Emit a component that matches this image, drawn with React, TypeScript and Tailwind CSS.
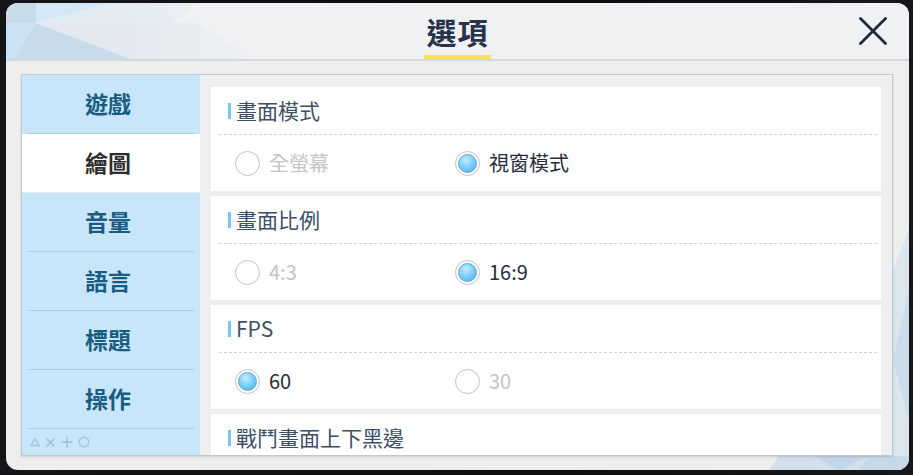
import React, { useState } from 'react';

const FONT = { fontFamily: '"Noto Sans CJK TC", "Noto Sans", sans-serif' };

const tabs = ['遊戲', '繪圖', '音量', '語言', '標題', '操作'];

type Section = { title: string; options: string[]; selected: number };

// last section is cut off by the scroll area, only its title shows
const sections: Section[] = [
  { title: '畫面模式', options: ['全螢幕', '視窗模式'], selected: 1 },
  { title: '畫面比例', options: ['4:3', '16:9'], selected: 1 },
  { title: 'FPS', options: ['60', '30'], selected: 0 },
  { title: '戰鬥畫面上下黑邊', options: [], selected: 0 },
];

function Radio({ checked }: { checked: boolean }) {
  return (
    <span className="w-[25px] h-[25px] rounded-full border border-[#c2c2c2] bg-white flex items-center justify-center shrink-0">
      {checked && (
        <span className="w-[19px] h-[19px] rounded-full border border-[#5fa9d6] bg-[radial-gradient(circle_at_40%_30%,#c4ecff_0%,#7fd0fa_45%,#45abe8_100%)]" />
      )}
    </span>
  );
}

function HeaderDecor() {
  return (
    <svg className="absolute left-0 top-0" width="260" height="56" viewBox="0 0 260 56">
      <defs>
        <linearGradient id="fade" x1="0" x2="1" y1="0" y2="0">
          <stop offset="0" stopColor="#eff1f3" stopOpacity="0" />
          <stop offset="1" stopColor="#eff1f3" stopOpacity="1" />
        </linearGradient>
      </defs>
      <polygon points="0,0 30,0 30,20 0,20" fill="#c9dae9" />
      <polygon points="30,0 105,0 30,20" fill="#d3e7f7" />
      <polygon points="105,0 190,0 165,20 30,20" fill="#e4ecf3" />
      <polygon points="0,20 30,20 8,56 0,56" fill="#cbe3f5" />
      <polygon points="30,20 8,56 125,56" fill="#c8dbeb" />
      <polygon points="30,20 190,20 250,56 125,56" fill="#e3e9ef" />
      <rect x="120" y="0" width="140" height="56" fill="url(#fade)" />
    </svg>
  );
}

function BodyDecor() {
  return (
    <svg className="absolute right-0 bottom-0" width="190" height="240" viewBox="0 0 190 240">
      <polygon points="190,0 190,240 174,240 174,40" fill="#dbe5ee" />
      <polygon points="190,60 174,130 190,190" fill="#cddcea" />
      <polygon points="60,226 190,226 190,240 50,240" fill="#d2e0ec" />
      <polygon points="95,226 150,226 120,240" fill="#c3d6e7" />
      <polygon points="150,226 190,226 190,240 140,240" fill="#c7d9e9" />
    </svg>
  );
}

function CornerIcons() {
  return (
    <div className="h-[26px] pl-[8px] flex items-center gap-[5px]">
      <svg width="10" height="10" viewBox="0 0 10 10">
        <polygon points="5,1.5 9,8.5 1,8.5" fill="none" stroke="#a8c5d9" strokeWidth="1.4" />
      </svg>
      <svg width="11" height="11" viewBox="0 0 11 11">
        <path d="M1.5 1.5 L9.5 9.5 M9.5 1.5 L1.5 9.5" stroke="#a8c5d9" strokeWidth="1.8" />
      </svg>
      <svg width="12" height="12" viewBox="0 0 12 12">
        <path d="M6 0.5 V11.5 M0.5 6 H11.5" stroke="#a8c5d9" strokeWidth="1.8" />
      </svg>
      <svg width="12" height="12" viewBox="0 0 12 12">
        <circle cx="6" cy="6" r="4.8" fill="none" stroke="#a8c5d9" strokeWidth="1.4" />
      </svg>
    </div>
  );
}

export default function App() {
  const [activeTab, setActiveTab] = useState(1);

  return (
    <div
      className="w-[913px] h-[475px] bg-[linear-gradient(90deg,#141518,#0d0e10_60%,#16181c)] pt-[3px] pl-[6px] overflow-hidden"
      style={FONT}
    >
      <div className="w-[903px] h-[467px] rounded-[12px] bg-[#eeeeee] overflow-hidden flex flex-col relative">
        {/* header */}
        <div className="h-[58px] shrink-0 bg-[#eff1f3] border-b-2 border-[#d6d9dc] relative grid grid-cols-[1fr_auto_1fr]">
          <HeaderDecor />
          <div />
          <div className="relative flex flex-col items-center pt-[13px]">
            <span className="text-[30px] leading-[30px] font-bold text-[#26334b] tracking-[1px]">選項</span>
            <span className="mt-[9px] w-[67px] h-[4px] bg-[#f6e34e]" />
          </div>
          <div className="relative flex items-center justify-end pr-[22px]">
            <svg width="28" height="28" viewBox="0 0 28 28">
              <path d="M1.5 1.5 L26.5 26.5 M26.5 1.5 L1.5 26.5" stroke="#1e293b" strokeWidth="2.8" strokeLinecap="round" />
            </svg>
          </div>
        </div>

        {/* body */}
        <div className="h-[409px] shrink-0 relative pt-[13px] pl-[15px] pr-[16px] flex">
          <BodyDecor />
          <div className="relative z-10 h-[382px] flex-1 flex border border-[#c4c9ce] bg-white shadow-[0_1px_2px_rgba(0,0,0,0.15)] overflow-hidden">
            {/* sidebar */}
            <div className="w-[178px] shrink-0 bg-[#c7e6fa] flex flex-col">
              {tabs.map((tab, i) => (
                <div key={tab} className="flex flex-col">
                  <button
                    onClick={() => setActiveTab(i)}
                    className={`h-[58px] pr-[6px] pb-[1px] flex items-center justify-center text-[23px] font-bold leading-none ${
                      activeTab === i ? 'bg-white text-[#2c2c2c]' : 'text-[#1a5b81]'
                    }`}
                  >
                    {tab}
                  </button>
                  <div className={activeTab === i ? 'h-px bg-[#e3eef5]' : 'h-px mx-[6px] bg-[#a9cde4]'} />
                </div>
              ))}
              <CornerIcons />
            </div>

            {/* options */}
            <div className="flex-1 bg-[#efefef] px-[11px] pt-[12px] flex flex-col gap-[5px] overflow-hidden">
              {sections.map((s) => (
                <div key={s.title} className="h-[104px] shrink-0 bg-white flex flex-col">
                  <div className="h-[47px] pl-[17px] flex items-center gap-[5px]">
                    <span className="w-[3px] h-[16px] bg-[#74c6ec]" />
                    <span className="text-[21px] leading-none text-[#3d4f66]">{s.title}</span>
                  </div>
                  {s.options.length > 0 && (
                    <>
                      <div className="ml-[8px] mr-[4px] border-t border-dashed border-[#d2d2d2]" />
                      <div className="flex-1 pl-[24px] flex items-center">
                        {s.options.map((o, i) => (
                          <div key={o} className="w-[220px] flex items-center gap-[9px]">
                            <Radio checked={s.selected === i} />
                            <span
                              className={`text-[20px] leading-none ${
                                s.selected === i ? 'text-[#262d3a]' : 'text-[#c4c4c4]'
                              }`}
                            >
                              {o}
                            </span>
                          </div>
                        ))}
                      </div>
                    </>
                  )}
                </div>
              ))}
            </div>
          </div>
        </div>
      </div>
    </div>
  );
}
